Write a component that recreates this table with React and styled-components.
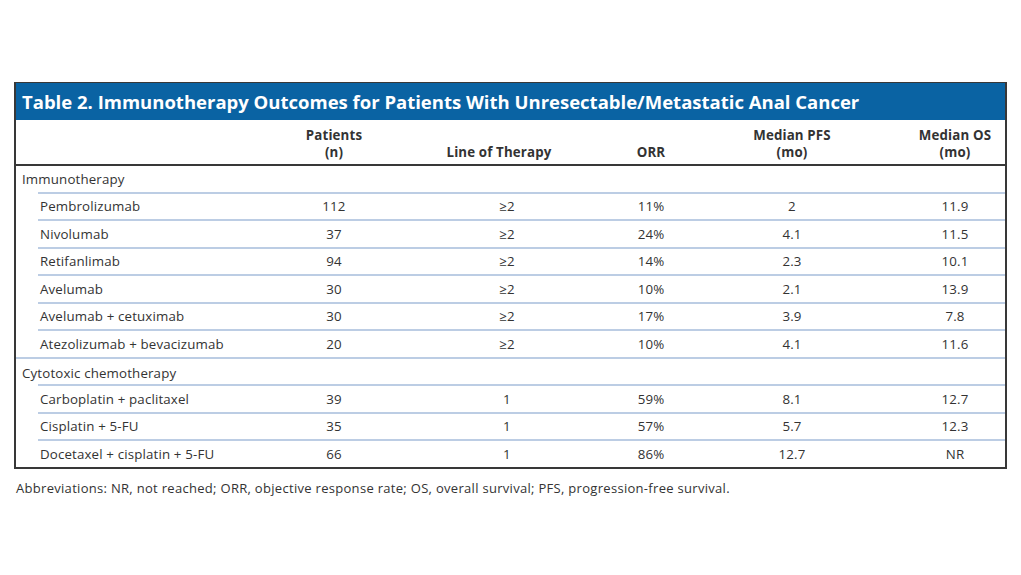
import React from 'react';
import styled, { createGlobalStyle } from 'styled-components';

const GlobalStyle = createGlobalStyle`
  body {
    margin: 0;
    background: #fff;
    font-family: "Open Sans", "Noto Sans", sans-serif;
    color: #333;
  }
`;

const Page = styled.div`
  width: 1021px;
  height: 575px;
  padding: 82px 0 0 14px;
  box-sizing: border-box;
  display: flex;
  flex-direction: column;
`;

const Box = styled.div`
  width: 993px;
  border: 2px solid #383838;
  border-top-width: 1px;
  box-sizing: border-box;
`;

const Title = styled.div`
  background: #0a63a3;
  color: #fff;
  font-weight: 700;
  font-size: 18.5px;
  height: 37px;
  line-height: 37px;
  padding-left: 6px;
  white-space: nowrap;
`;

const cols = (indent) =>
  `${254 - indent}px 128px 202px 102px 180px 123px`;

const Header = styled.div`
  display: grid;
  grid-template-columns: ${cols(0)};
  align-items: end;
  height: 46px;
  padding-bottom: 3px;
  box-sizing: border-box;
  border-bottom: 2px solid #383838;
  font-size: 13.3px;
  letter-spacing: 0.15px;
  font-weight: 700;
  line-height: 17px;
`;

const Row = styled.div`
  display: grid;
  grid-template-columns: ${(p) => cols(p.$indent)};
  align-items: center;
  margin-left: ${(p) => p.$indent}px;
  height: ${(p) => (p.$line ? 27.5 : 25.5)}px;
  border-top: ${(p) => (p.$line ? '2px solid #bccde4' : 'none')};
  box-sizing: border-box;
  font-size: 13.3px;
  letter-spacing: 0.15px;
`;

const Label = styled.div`
  padding-left: ${(p) => p.$pad}px;
  padding-top: ${(p) => p.$top || 0}px;
  white-space: nowrap;
`;

const Cell = styled.div`
  text-align: center;
  padding-left: ${(p) => p.$shift || 0}px;
`;

const Note = styled.p`
  margin: 10px 0 0 2px;
  font-size: 13px;
  letter-spacing: 0.3px;
  color: #333;
`;

const groups = [
  {
    name: 'Immunotherapy',
    rows: [
      ['Pembrolizumab', '112', '≥2', '11%', '2', '11.9'],
      ['Nivolumab', '37', '≥2', '24%', '4.1', '11.5'],
      ['Retifanlimab', '94', '≥2', '14%', '2.3', '10.1'],
      ['Avelumab', '30', '≥2', '10%', '2.1', '13.9'],
      ['Avelumab + cetuximab', '30', '≥2', '17%', '3.9', '7.8'],
      ['Atezolizumab + bevacizumab', '20', '≥2', '10%', '4.1', '11.6'],
    ],
  },
  {
    name: 'Cytotoxic chemotherapy',
    rows: [
      ['Carboplatin + paclitaxel', '39', '1', '59%', '8.1', '12.7'],
      ['Cisplatin + 5-FU', '35', '1', '57%', '5.7', '12.3'],
      ['Docetaxel + cisplatin + 5-FU', '66', '1', '86%', '12.7', 'NR'],
    ],
  },
];

export default function App() {
  return (
    <Page>
      <GlobalStyle />
      <Box>
        <Title>
          Table 2. Immunotherapy Outcomes for Patients With Unresectable/Metastatic Anal Cancer
        </Title>
        <Header>
          <div />
          <Cell>Patients<br />(n)</Cell>
          <Cell>Line of Therapy</Cell>
          <Cell>ORR</Cell>
          <Cell>Median PFS<br />(mo)</Cell>
          <Cell $shift={23}>Median OS<br />(mo)</Cell>
        </Header>
        {groups.map((g, gi) => (
          <React.Fragment key={g.name}>
            <Row $indent={0} $line={gi > 0}>
              <Label $pad={6} $top={gi > 0 ? 3 : 1}>{g.name}</Label>
            </Row>
            {g.rows.map((r) => (
              <Row key={r[0]} $indent={22} $line>
                <Label $pad={2}>{r[0]}</Label>
                <Cell>{r[1]}</Cell>
                <Cell $shift={16}>{r[2]}</Cell>
                <Cell>{r[3]}</Cell>
                <Cell>{r[4]}</Cell>
                <Cell $shift={23}>{r[5]}</Cell>
              </Row>
            ))}
          </React.Fragment>
        ))}
      </Box>
      <Note>
        Abbreviations: NR, not reached; ORR, objective response rate; OS, overall survival; PFS, progression-free survival.
      </Note>
    </Page>
  );
}
